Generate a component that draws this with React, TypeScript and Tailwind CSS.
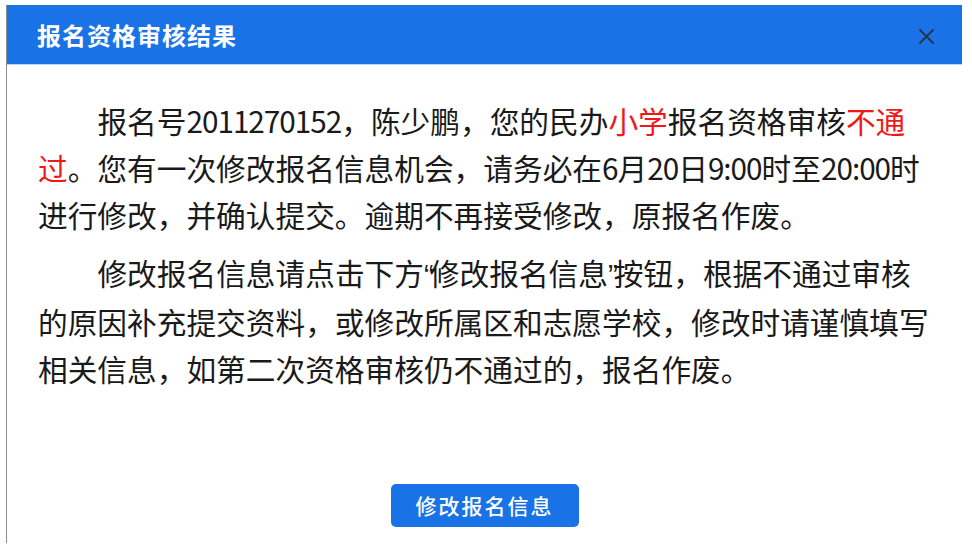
import React from 'react';

const font = { fontFamily: '"Microsoft YaHei", "Noto Sans CJK SC", "Noto Sans", sans-serif' };

// digits in the original font are narrower than Noto's
function Num({ children }: { children: React.ReactNode }) {
  return <span className="tracking-[-1px]">{children}</span>;
}

function Quote({ children }: { children: React.ReactNode }) {
  return <span className="font-['Liberation_Sans'] tracking-[-4px]">{children}</span>;
}

export default function App() {
  return (
    <div className="w-[972px] h-[553px] bg-white pt-[5px] pl-[6px] overflow-hidden" style={font}>
      <div className="w-[956px] h-[538px] border-l border-[#8c8c8c] flex flex-col">
        {/* Header */}
        <div className="h-[60px] bg-[#1a73e6] border-b border-[#b9d6f7] flex items-center justify-between pl-[30px] pr-[27px]">
          <h1 className="text-white text-[24px] font-bold tracking-[1px]">报名资格审核结果</h1>
          <svg width="17" height="17" viewBox="0 0 17 17" className="mt-[3px]">
            <path d="M1.5 1.5 L15.5 15.5 M15.5 1.5 L1.5 15.5" stroke="#263445" strokeWidth="1.8" />
          </svg>
        </div>

        {/* Body */}
        <div className="pl-[31px] pt-[32px] text-[29.7px] leading-[47px] text-[#1a1a1a]">
          <div>
            <div className="whitespace-nowrap indent-[2em]">
              报名号<Num>2011270152</Num>，陈少鹏，您的民办<span className="text-[#f01818]">小学</span>报名资格审核<span className="text-[#f01818]">不通</span>
            </div>
            <div className="whitespace-nowrap">
              <span className="text-[#f01818]">过</span>。您有一次修改报名信息机会，请务必在<Num>6</Num>月<Num>20</Num>日<Num>9:00</Num>时至<Num>20:00</Num>时
            </div>
            <div className="whitespace-nowrap">进行修改，并确认提交。逾期不再接受修改，原报名作废。</div>
          </div>
          <div className="mt-[11px]">
            <div className="whitespace-nowrap indent-[2em]">
              修改报名信息请点击下方<Quote>“</Quote>修改报名信息<Quote>”</Quote>按钮，根据不通过审核
            </div>
            <div className="whitespace-nowrap">的原因补充提交资料，或修改所属区和志愿学校，修改时请谨慎填写</div>
            <div className="whitespace-nowrap">相关信息，如第二次资格审核仍不通过的，报名作废。</div>
          </div>
        </div>

        {/* Footer */}
        <div className="flex justify-center mt-[92px]">
          <button className="w-[188px] h-[43px] rounded-[5px] bg-[#1a73e6] text-white text-[21px] tracking-[2px] font-medium">
            修改报名信息
          </button>
        </div>
      </div>
    </div>
  );
}
